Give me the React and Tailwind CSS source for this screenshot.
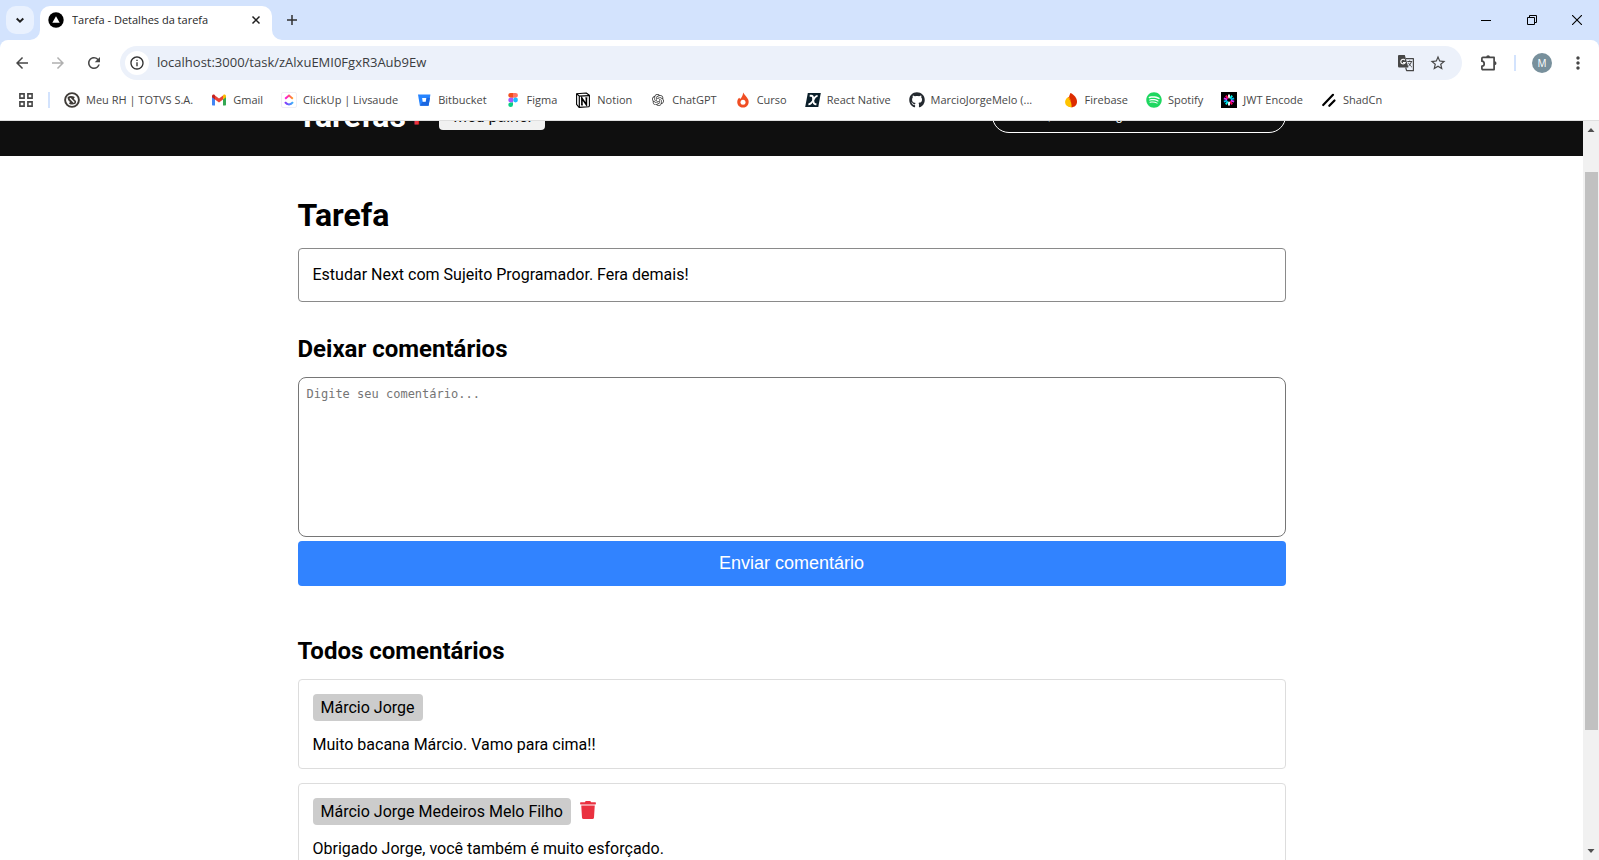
import React from "react";
import { FaTrash, FaGithub, FaSpotify } from "react-icons/fa";
import { SiOpenai } from "react-icons/si";
import {
  MdArrowBack,
  MdArrowForward,
  MdRefresh,
  MdInfoOutline,
  MdStarBorder,
  MdMoreVert,
} from "react-icons/md";

function Svg({ box = "0 0 16 16", className = "size-4", children }) {
  return (
    <svg viewBox={box} className={className} fill="none" aria-hidden="true">
      {children}
    </svg>
  );
}

const TranslateIcon = () => (
  <Svg box="0 0 18 18" className="size-[18px]">
    <path d="M2.200 1h5.600l3.600 12.500H2.200A1.200 1.200 0 011 12.300V2.200C1 1.500 1.500 1 2.200 1z" fill="#474747" />
    <path d="M7.900 6.200a2.300 2.300 0 10.300 2.300H6" stroke="#fff" strokeWidth="1.100" />
    <path d="M9 4.700h7.400v12H9.600l-.9-3.200" stroke="#474747" strokeWidth="1.200" strokeLinejoin="round" />
    <path d="M10.300 7.500h4.900M12.700 6.500v1M14.400 7.500c-.4 2-1.700 3.700-3 4.600M11.500 8.800c.6 1.500 1.900 3.200 3.300 4.200" stroke="#474747" strokeWidth="1" />
  </Svg>
);

const ExtensionIcon = () => (
  <Svg box="-1 0 18 18" className="size-[18px]">
    <path
      d="M2.900 3.400h11.200v12.200H2.900c-.6 0-1-.4-1-1v-2.400c1.300 0 2.300-.8 2.300-2.200S3.200 7.200 1.900 7.200V4.400c0-.6.4-1 1-1z"
      stroke="#474747"
      strokeWidth="1.700"
      strokeLinejoin="round"
    />
    <path d="M6.200 3.200a1.900 1.900 0 013.800 0zM14.600 7.300a1.900 1.900 0 010 3.800z" fill="#474747" />
  </Svg>
);

const TotvsIcon = () => (
  <Svg>
    <circle cx="8" cy="8" r="6.900" stroke="#403c38" strokeWidth="1.900" />
    <path d="M3.600 5.200c1.600-1.500 4.600-1.600 7.200-.3l-1 2.100c1 .5 1.800 1.200 2.200 2.200.3 1-.1 2-1 2.900-1.900.8-4.200.6-6-.4l1-1.900C4.600 9.100 3.500 7.300 3.600 5.200z" fill="#403c38" />
    <path d="M6 6.200l4.200 4.200" stroke="#fff" strokeWidth="1.400" />
  </Svg>
);

const GmailIcon = () => (
  <Svg>
    <path d="M1 4v8.500c0 .6.4 1 1 1h2V7L1 4z" fill="#4285f4" />
    <path d="M15 4v8.500c0 .6-.4 1-1 1h-2V7l3-3z" fill="#34a853" />
    <path d="M12 3.600V7.500l3-2.300V4c0-1.400-1.500-2-2.500-1.300z" fill="#fbbc04" />
    <path d="M1 4v1.200l3 2.300V3.600l-.5-.9C2.500 2 1 2.600 1 4z" fill="#c5221f" />
    <path d="M4 7.500V3.400l4 3 4-3v4.100l-4 3z" fill="#ea4335" />
  </Svg>
);

const ClickUpIcon = () => (
  <Svg>
    <rect x="0.500" y="0.500" width="15" height="15" rx="1.500" fill="#fff" stroke="#f0eef4" />
    <path d="M4.200 6.800L8 3.600l3.800 3.200" stroke="url(#cuTop)" strokeWidth="2" />
    <path d="M4 10.200c2.200 2.900 5.800 2.900 8 0" stroke="url(#cuLow)" strokeWidth="2" />
    <defs>
      <linearGradient id="cuTop" x1="4" x2="12" y1="0" y2="0" gradientUnits="userSpaceOnUse">
        <stop stopColor="#ff02f0" />
        <stop offset="1" stopColor="#ffa012" />
      </linearGradient>
      <linearGradient id="cuLow" x1="4" x2="12" y1="0" y2="0" gradientUnits="userSpaceOnUse">
        <stop stopColor="#8930fd" />
        <stop offset="1" stopColor="#39b5fb" />
      </linearGradient>
    </defs>
  </Svg>
);

const BitbucketIcon = () => (
  <Svg>
    <path d="M2 2.500h12.400l-1.800 11.200H3.900z" fill="#2684ff" />
    <path d="M14 5.800h-3.600l-.7 4.200H6.400l-2.200 3.300.3.400h8.100z" fill="#1a66e0" />
    <path d="M6.100 6h4.200l-.6 3.800H6.700z" fill="#fff" />
  </Svg>
);

const FigmaIcon = () => (
  <Svg>
    <path d="M5.600 1H8v4.700H5.600a2.350 2.350 0 010-4.700z" fill="#f24e1e" />
    <path d="M8 1h2.600a2.350 2.350 0 010 4.700H8z" fill="#ff7262" />
    <path d="M5.600 5.700H8v4.700H5.600a2.350 2.350 0 010-4.700z" fill="#a259ff" />
    <circle cx="10.500" cy="8" r="2.400" fill="#1abcfe" />
    <path d="M5.600 10.400H8v2.400a2.350 2.350 0 11-2.400-2.400z" fill="#0acf83" />
  </Svg>
);

const NotionIcon = () => (
  <Svg>
    <path d="M1.600 1.700l9.600-.7 3.200 2.300v10.600l-.7.9-9.600.6-2.500-3z" fill="#fff" stroke="#000" strokeWidth="1.100" strokeLinejoin="round" />
    <path d="M1.600 1.700l2.800 2.500 9.800-.6M4.300 4.200v11" stroke="#000" strokeWidth="1.200" />
    <path d="M6.900 13V6.200l4.500 6.500V5.800" stroke="#000" strokeWidth="1.600" />
    <path d="M6 6.200h1.700M10.300 5.800h2.100M6 13h2" stroke="#000" strokeWidth="0.800" />
  </Svg>
);

const FlameRingIcon = () => (
  <Svg>
    <path d="M8.200.4c.6 2 4 4.300 5.100 7.300 1.400 4.200-1.300 7.900-5.300 7.900S1.400 12.300 2.500 8.300c.4-1.300 1-2 1.700-2.600l1 1.300C6.700 5.400 7.900 3 8.200.4z" fill="#f04e23" />
    <circle cx="8" cy="10.300" r="2.500" fill="#fff" />
  </Svg>
);

const ReactNativeIcon = () => (
  <Svg>
    <path d="M2.800 1h13L13.300 15H.2z" fill="#0b1f2a" />
    <path d="M4.700 3.800h1.500c1.300 0 2 1 2 3.200s.6 5.300 2.400 5.300h.8" stroke="#fff" strokeWidth="1.900" />
    <path d="M12.600 3.800c-1.500 0-2.800 1.300-4 3.700-1.500 3-2.900 4.800-5.200 4.800" stroke="#fff" strokeWidth="1.700" />
  </Svg>
);

const FirebaseIcon = () => (
  <Svg>
    <path d="M7.400 1c3.600 1.400 6.600 5 6.600 8.700 0 3.400-2.400 5.500-5.600 5.500-1.700 0-3.200-.8-4-2.200C4.600 8.500 5.800 5 7.400 1z" fill="#dd2c00" />
    <path d="M4.600 5.600c2 1.400 4.200 4.600 4 9.600-3.700.2-6.500-1.800-6.500-5.100 0-1.900 1.100-3.500 2.500-4.500z" fill="#ffc400" />
    <path d="M4.600 5.600c.5-.4 1-.7 1.600-.9.500 1.500 2.400 3.800 2.400 10.500.3-3.900-1.400-7.900-4-9.600z" fill="#ff9100" />
  </Svg>
);

const JWT_SPOKES = [
  { a: 0, c: "#ffffff" },
  { a: 36, c: "#00f2e6" },
  { a: 72, c: "#00b9f1" },
  { a: 108, c: "#d63aff" },
  { a: 144, c: "#fb015b" },
  { a: 180, c: "#ffffff" },
  { a: 216, c: "#00f2e6" },
  { a: 252, c: "#00b9f1" },
  { a: 288, c: "#d63aff" },
  { a: 324, c: "#fb015b" },
];

const JwtIcon = () => (
  <Svg>
    <rect width="16" height="16" fill="#000" />
    {JWT_SPOKES.map((s) => (
      <path key={s.a} d="M8 2.600v3.600" stroke={s.c} strokeWidth="1.900" transform={`rotate(${s.a} 8 8)`} />
    ))}
  </Svg>
);

const ShadcnIcon = () => (
  <Svg>
    <path d="M2.200 13L12 2.800M8.300 13.800l5.200-5.300" stroke="#000" strokeWidth="2.200" strokeLinecap="round" />
  </Svg>
);

const BOOKMARKS = [
  { label: "Meu RH | TOTVS S.A.", icon: <TotvsIcon /> },
  { label: "Gmail", icon: <GmailIcon /> },
  { label: "ClickUp | Livsaude", icon: <ClickUpIcon /> },
  { label: "Bitbucket", icon: <BitbucketIcon /> },
  { label: "Figma", icon: <FigmaIcon /> },
  { label: "Notion", icon: <NotionIcon /> },
  { label: "ChatGPT", icon: <SiOpenai className="size-3 text-[#3c3c3c]" /> },
  { label: "Curso", icon: <FlameRingIcon /> },
  { label: "React Native", icon: <ReactNativeIcon /> },
  { label: "MarcioJorgeMelo (...", icon: <FaGithub className="size-4 text-[#24292f]" />, full: true },
  { label: "Firebase", icon: <FirebaseIcon /> },
  { label: "Spotify", icon: <FaSpotify className="size-4 text-[#1ed760]" /> },
  { label: "JWT Encode", icon: <JwtIcon /> },
  { label: "ShadCn", icon: <ShadcnIcon /> },
];

const COMMENTS = [
  { author: "Márcio Jorge", text: "Muito bacana Márcio. Vamo para cima!!", own: false },
  {
    author: "Márcio Jorge Medeiros Melo Filho",
    text: "Obrigado Jorge, você também é muito esforçado.",
    own: true,
  },
];

function TabStrip() {
  return (
    <div className="flex h-10 shrink-0 items-end bg-[#d3e3fd]">
      <div className="flex h-full items-center pl-1.5">
        <button type="button" aria-label="Pesquisar guias" className="flex size-7 items-center justify-center rounded-[10px] bg-[#e9f1fe]">
          <Svg>
            <path d="M4.700 6.500L8 9.700l3.300-3.200" stroke="#1f1f1f" strokeWidth="1.900" />
          </Svg>
        </button>
      </div>
      <div className="relative ml-1.5 flex h-[34px] w-[232px] items-center rounded-t-[10px] bg-white px-2 pb-1.5">
        <Svg box="0 0 10 10" className="absolute -left-2.5 bottom-0 size-2.5">
          <path d="M10 0v10H0A10 10 0 0010 0z" fill="#fff" />
        </Svg>
        <Svg box="0 0 10 10" className="absolute -right-2.5 bottom-0 size-2.5">
          <path d="M0 0v10h10A10 10 0 010 0z" fill="#fff" />
        </Svg>
        <Svg>
          <circle cx="8" cy="8" r="7.700" fill="#000" />
          <path d="M8 4.300l3.700 6.400H4.300z" fill="#fff" />
        </Svg>
        <span className="ml-2 flex-1 truncate text-[11px] leading-4 text-[#1f1f1f]">Tarefa - Detalhes da tarefa</span>
        <button type="button" aria-label="Fechar guia" className="flex size-4 items-center justify-center">
          <Svg>
            <path d="M4.500 4.500l7 7m0-7l-7 7" stroke="#1f1f1f" strokeWidth="1.500" />
          </Svg>
        </button>
      </div>
      <button type="button" aria-label="Nova guia" className="ml-1.5 flex h-10 w-7 items-center justify-center">
        <Svg>
          <path d="M8 3v10M3 8h10" stroke="#303030" strokeWidth="1.500" />
        </Svg>
      </button>
      <div className="ml-auto flex h-full">
        <button type="button" aria-label="Minimizar" className="flex w-[46px] items-center justify-center">
          <Svg box="0 0 10 10" className="size-2.5">
            <path d="M0 5.500h10" stroke="#000" />
          </Svg>
        </button>
        <button type="button" aria-label="Restaurar" className="flex w-[46px] items-center justify-center">
          <Svg box="0 0 10 10" className="size-2.5">
            <path d="M.5 2.500h7v7h-7zM2.500 2.500v-2h7v7h-2" stroke="#000" />
          </Svg>
        </button>
        <button type="button" aria-label="Fechar" className="flex w-11 items-center justify-center">
          <Svg box="0 0 10 10" className="size-2.5">
            <path d="M0 0l10 10M10 0L0 10" stroke="#000" strokeWidth="1.100" />
          </Svg>
        </button>
      </div>
    </div>
  );
}

function Toolbar() {
  return (
    <div className="bg-[#d3e3fd]">
      <div className="flex h-[46px] items-center rounded-t-lg bg-white pl-3 pr-[11px] text-[#474747]">
        <button type="button" aria-label="Voltar" className="flex w-5 justify-center">
          <MdArrowBack className="size-[18px]" />
        </button>
        <button type="button" aria-label="Avançar" className="ml-4 flex w-5 justify-center text-[#b0b0b0]">
          <MdArrowForward className="size-[18px]" />
        </button>
        <button type="button" aria-label="Recarregar" className="ml-4 flex w-5 justify-center">
          <MdRefresh className="size-[18px]" />
        </button>
        <div className="ml-4 flex h-[34px] flex-1 items-center rounded-full bg-[#ecf1fa] pl-[5px] pr-3.5">
          <button type="button" aria-label="Informações do site" className="flex size-6 items-center justify-center rounded-full bg-white">
            <MdInfoOutline className="size-4 text-[#303030]" />
          </button>
          <input
            aria-label="Endereço"
            defaultValue="localhost:3000/task/zAlxuEMI0FgxR3Aub9Ew"
            className="ml-2 min-w-0 flex-1 bg-transparent text-[13px] text-[#3a3c40] outline-none"
          />
          <button type="button" aria-label="Traduzir" className="flex w-5 justify-center">
            <TranslateIcon />
          </button>
          <button type="button" aria-label="Favoritar" className="ml-3 flex w-5 justify-center">
            <MdStarBorder className="size-[18px]" />
          </button>
        </div>
        <button type="button" aria-label="Extensões" className="ml-4 flex w-5 justify-center">
          <ExtensionIcon />
        </button>
        <span className="ml-4 h-4 w-0.5 bg-[#d3e3fd]" />
        <button type="button" aria-label="Perfil" className="ml-4 flex size-5 items-center justify-center rounded-full bg-[#78909c] text-[10px] text-white">
          M
        </button>
        <button type="button" aria-label="Menu" className="ml-4 flex w-5 justify-center">
          <MdMoreVert className="size-5" />
        </button>
      </div>
    </div>
  );
}

function BookmarkBar() {
  return (
    <nav aria-label="Favoritos" className="flex h-[35px] shrink-0 items-center overflow-hidden border-b border-[#dfdfdf] pb-1.5 pl-[18px] text-[11px] leading-4 whitespace-nowrap text-[#474747]">
      <button type="button" aria-label="Aplicativos">
        <Svg>
          <path d="M1.900 1.900h4.200v4.200H1.900zM9.900 1.900h4.200v4.200H9.900zM1.900 9.900h4.200v4.200H1.900zM9.900 9.900h4.200v4.200H9.900z" stroke="#474747" strokeWidth="1.600" />
        </Svg>
      </button>
      <span className="ml-3.5 h-4 w-0.5 shrink-0 bg-[#d3e3fd]" />
      <div className="ml-3.5 flex gap-[18px]">
        {BOOKMARKS.map((b) => (
          <a key={b.label} href="#" className={b.full ? "flex min-w-[136px] items-center gap-1.5" : "flex items-center gap-1.5"}>
            <span className="flex size-4 items-center justify-center">{b.icon}</span>
            {b.label}
          </a>
        ))}
      </div>
    </nav>
  );
}

function SiteHeader() {
  return (
    <header className="-mt-[45px] h-20 bg-[#0f0f0f]">
      <div className="mx-auto flex h-full max-w-[1024px] items-center justify-between px-[18px]">
        <div className="flex items-center">
          <a href="#" className="text-[32px] leading-[38px] font-bold text-white">
            Tarefas<span className="pl-0.5 text-[#ea3140]">+</span>
          </a>
          <a href="#" className="ml-3.5 rounded bg-[#f1f1f1] px-3.5 py-1 leading-[19px] text-[#0f0f0f]">
            Meu painel
          </a>
        </div>
        <button type="button" className="rounded-full border border-white px-[34px] py-2 font-['Liberation_Sans',sans-serif] text-[13px] leading-4 text-white">
          Olá, Márcio Jorge Medeiros Melo Filho
        </button>
      </div>
    </header>
  );
}

function Comment({ author, text, own }) {
  return (
    <article className="rounded border border-[#ddd] p-3.5 leading-[19px]">
      <div className="flex items-center">
        <span className="rounded bg-[#ccc] px-2 py-1">{author}</span>
        {own && (
          <button type="button" aria-label="Excluir comentário" className="mx-2 pb-1 text-[#ea3140]">
            <FaTrash className="size-[18px]" />
          </button>
        )}
      </div>
      <p className="mt-3.5">{text}</p>
    </article>
  );
}

function ScrollBar() {
  return (
    <div aria-hidden="true" className="flex w-4 shrink-0 flex-col items-center bg-[#f1f1f1] px-px">
      <Svg box="0 0 16 17" className="h-[17px] w-4">
        <path d="M4.500 11L8 7l3.500 4z" fill="#505050" />
      </Svg>
      <div className="grow-[34]" />
      <div className="w-[13px] grow-[558] bg-[#c1c1c1]" />
      <div className="grow-[113]" />
      <Svg box="0 0 16 17" className="h-[17px] w-4">
        <path d="M4.500 6L8 10l3.500-4z" fill="#505050" />
      </Svg>
    </div>
  );
}

export default function App() {
  return (
    <div className="flex h-screen flex-col overflow-hidden bg-white font-['Open_Sans',sans-serif]">
      <TabStrip />
      <Toolbar />
      <BookmarkBar />
      <div className="flex min-h-0 flex-1">
        <div className="min-w-0 flex-1 overflow-hidden font-[Roboto,sans-serif] text-base text-black">
          <SiteHeader />
          <main className="mx-auto max-w-[1024px] px-[18px] pt-10">
            <h1 className="text-[32px] leading-[38px] font-bold">Tarefa</h1>
            <article className="mt-3.5 rounded border border-[#8a8a8a] p-3.5">
              <p className="leading-6">Estudar Next com Sujeito Programador. Fera demais!</p>
            </article>

            <section className="mt-8">
              <h2 className="mb-[13px] text-2xl leading-[30px] font-bold">Deixar comentários</h2>
              <form className="flex flex-col gap-1" onSubmit={(e) => e.preventDefault()}>
                <textarea
                  aria-label="Comentário"
                  placeholder="Digite seu comentário..."
                  className="h-40 w-full resize-none rounded-lg border border-[#767676] p-2 font-['DejaVu_Sans_Mono',monospace] text-xs leading-4 outline-none placeholder:text-[#757575]"
                />
                <button type="submit" className="h-[45px] rounded bg-[#3183ff] pb-0.5 font-['Liberation_Sans',sans-serif] text-lg text-white">
                  Enviar comentário
                </button>
              </form>
            </section>

            <section className="mt-[50px]">
              <h2 className="mb-[13px] text-2xl leading-[30px] font-bold">Todos comentários</h2>
              <div className="flex flex-col gap-3.5">
                {COMMENTS.map((c) => (
                  <Comment key={c.author} {...c} />
                ))}
              </div>
            </section>
          </main>
        </div>
        <ScrollBar />
      </div>
    </div>
  );
}
